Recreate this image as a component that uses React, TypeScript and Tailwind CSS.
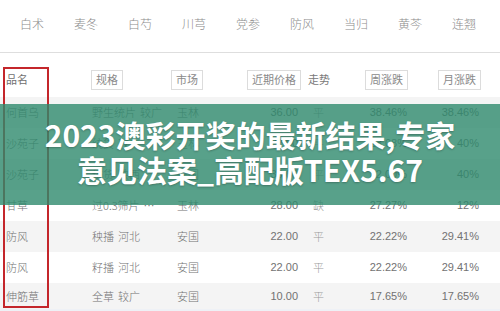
import React from 'react';

const herbs = ['白术', '麦冬', '白芍', '川芎', '党参', '防风', '当归', '黄芩', '连翘'];

type Row = {
  name: string;
  spec: [string, string];
  market: string;
  price: string;
  trend: string;
  week: string;
  month: string;
};

const rows: Row[] = [
  { name: '何首乌', spec: ['野生统片', '较广'], market: '玉林', price: '36.00', trend: '平', week: '38.46%', month: '38.46%' },
  { name: '沙苑子', spec: ['统货', '较广'], market: '玉林', price: '32.00', trend: '平', week: '23.08%', month: '40%' },
  { name: '沙苑子', spec: ['统货', '陕西'], market: '安国', price: '33.00', trend: '平', week: '32.00%', month: '40%' },
  { name: '甘草', spec: ['过0.3筛片', '…'], market: '玉林', price: '28.00', trend: '缺', week: '27.27%', month: '12%' },
  { name: '防风', spec: ['秧播', '河北'], market: '安国', price: '22.00', trend: '平', week: '22.22%', month: '29.41%' },
  { name: '防风', spec: ['籽播', '河北'], market: '安国', price: '22.00', trend: '平', week: '22.22%', month: '29.41%' },
  { name: '伸筋草', spec: ['全草', '较广'], market: '安国', price: '10.00', trend: '平', week: '17.65%', month: '17.65%' },
];

// column widths add up to the 500px window
const cols = 'grid grid-cols-[88px_80px_76px_60px_50px_75px_71px]';

function HeadBox({ children }: { children: React.ReactNode }) {
  return (
    <span className="inline-flex h-[20px] items-center border border-[#dcdcdc] px-[4px] text-[11px] text-[#8a8a8a]">
      {children}
    </span>
  );
}

export default function App() {
  return (
    <div
      className="relative h-[311px] w-[500px] overflow-hidden bg-white text-[#727272]"
      style={{ fontFamily: '"Noto Sans CJK SC", "Liberation Sans", sans-serif' }}
    >
      {/* herb tabs */}
      <nav className="flex h-[53px] items-center gap-[30px] border-b border-[#dedede] pb-[4px] pl-[20px] text-[12px] text-[#8c8c8c]">
        {herbs.map((h) => (
          <span key={h} className="w-[24px] whitespace-nowrap font-light">
            {h}
          </span>
        ))}
      </nav>

      <div className="mt-[13px]">
        <div className={`${cols} mb-[4px] h-[27px] items-center text-[11px]`}>
          <span className="pl-[6px] text-[#707070]">品名</span>
          <span className="pl-[3px]"><HeadBox>规格</HeadBox></span>
          <span className="pl-[3px]"><HeadBox>市场</HeadBox></span>
          <span className="pl-[3px]"><HeadBox>近期价格</HeadBox></span>
          <span className="pl-[4px] text-[#7a7a7a]">走势</span>
          <span className="pl-[11px]"><HeadBox>周涨跌</HeadBox></span>
          <span className="pl-[9px]"><HeadBox>月涨跌</HeadBox></span>
        </div>

        {rows.map((r, i) => (
          <div
            key={i}
            className={`${cols} items-center text-[11px] font-light ${i === rows.length - 1 ? 'h-[26px]' : 'h-[31px]'} ${
              i % 2 === 0 ? 'bg-[#f4f4f4]' : 'bg-white'
            }`}
          >
            <span className="pl-[6px] whitespace-nowrap">{r.name}</span>
            <span className="flex gap-[4px] pl-[4px] whitespace-nowrap">
              <span>{r.spec[0]}</span>
              <span>{r.spec[1]}</span>
            </span>
            <span className="pl-[9px]">{r.market}</span>
            <span className="pr-[6px] text-right" style={{ fontFamily: '"Liberation Sans", sans-serif' }}>{r.price}</span>
            <span className="pl-[9px] text-[#9a9a9a]">{r.trend}</span>
            <span className="pr-[22px] text-right" style={{ fontFamily: '"Liberation Sans", sans-serif' }}>{r.week}</span>
            <span className="pr-[21px] text-right" style={{ fontFamily: '"Liberation Sans", sans-serif' }}>{r.month}</span>
          </div>
        ))}
        <div className="h-[4px] bg-[#eef1f6]" />
      </div>

      {/* red annotation frame round the name column */}
      <div className="pointer-events-none absolute left-[3px] top-[67px] h-[241px] w-[46px] border-2 border-[#c4262b]" />

      {/* title band laid over the table */}
      <div className="absolute left-0 top-[104px] flex h-[101px] w-full flex-col items-center justify-center bg-[#2e8a6d]/80 pb-[6px]">
        <p className="text-[30px] font-bold leading-[35px] text-white [text-shadow:0_1px_2px_rgba(0,0,0,0.25)]">
          2023澳彩开奖的最新结果,专家
        </p>
        <p className="text-[30px] font-bold leading-[35px] text-white [text-shadow:0_1px_2px_rgba(0,0,0,0.25)]">
          意见法案_高配版TEX5.67
        </p>
      </div>
    </div>
  );
}
